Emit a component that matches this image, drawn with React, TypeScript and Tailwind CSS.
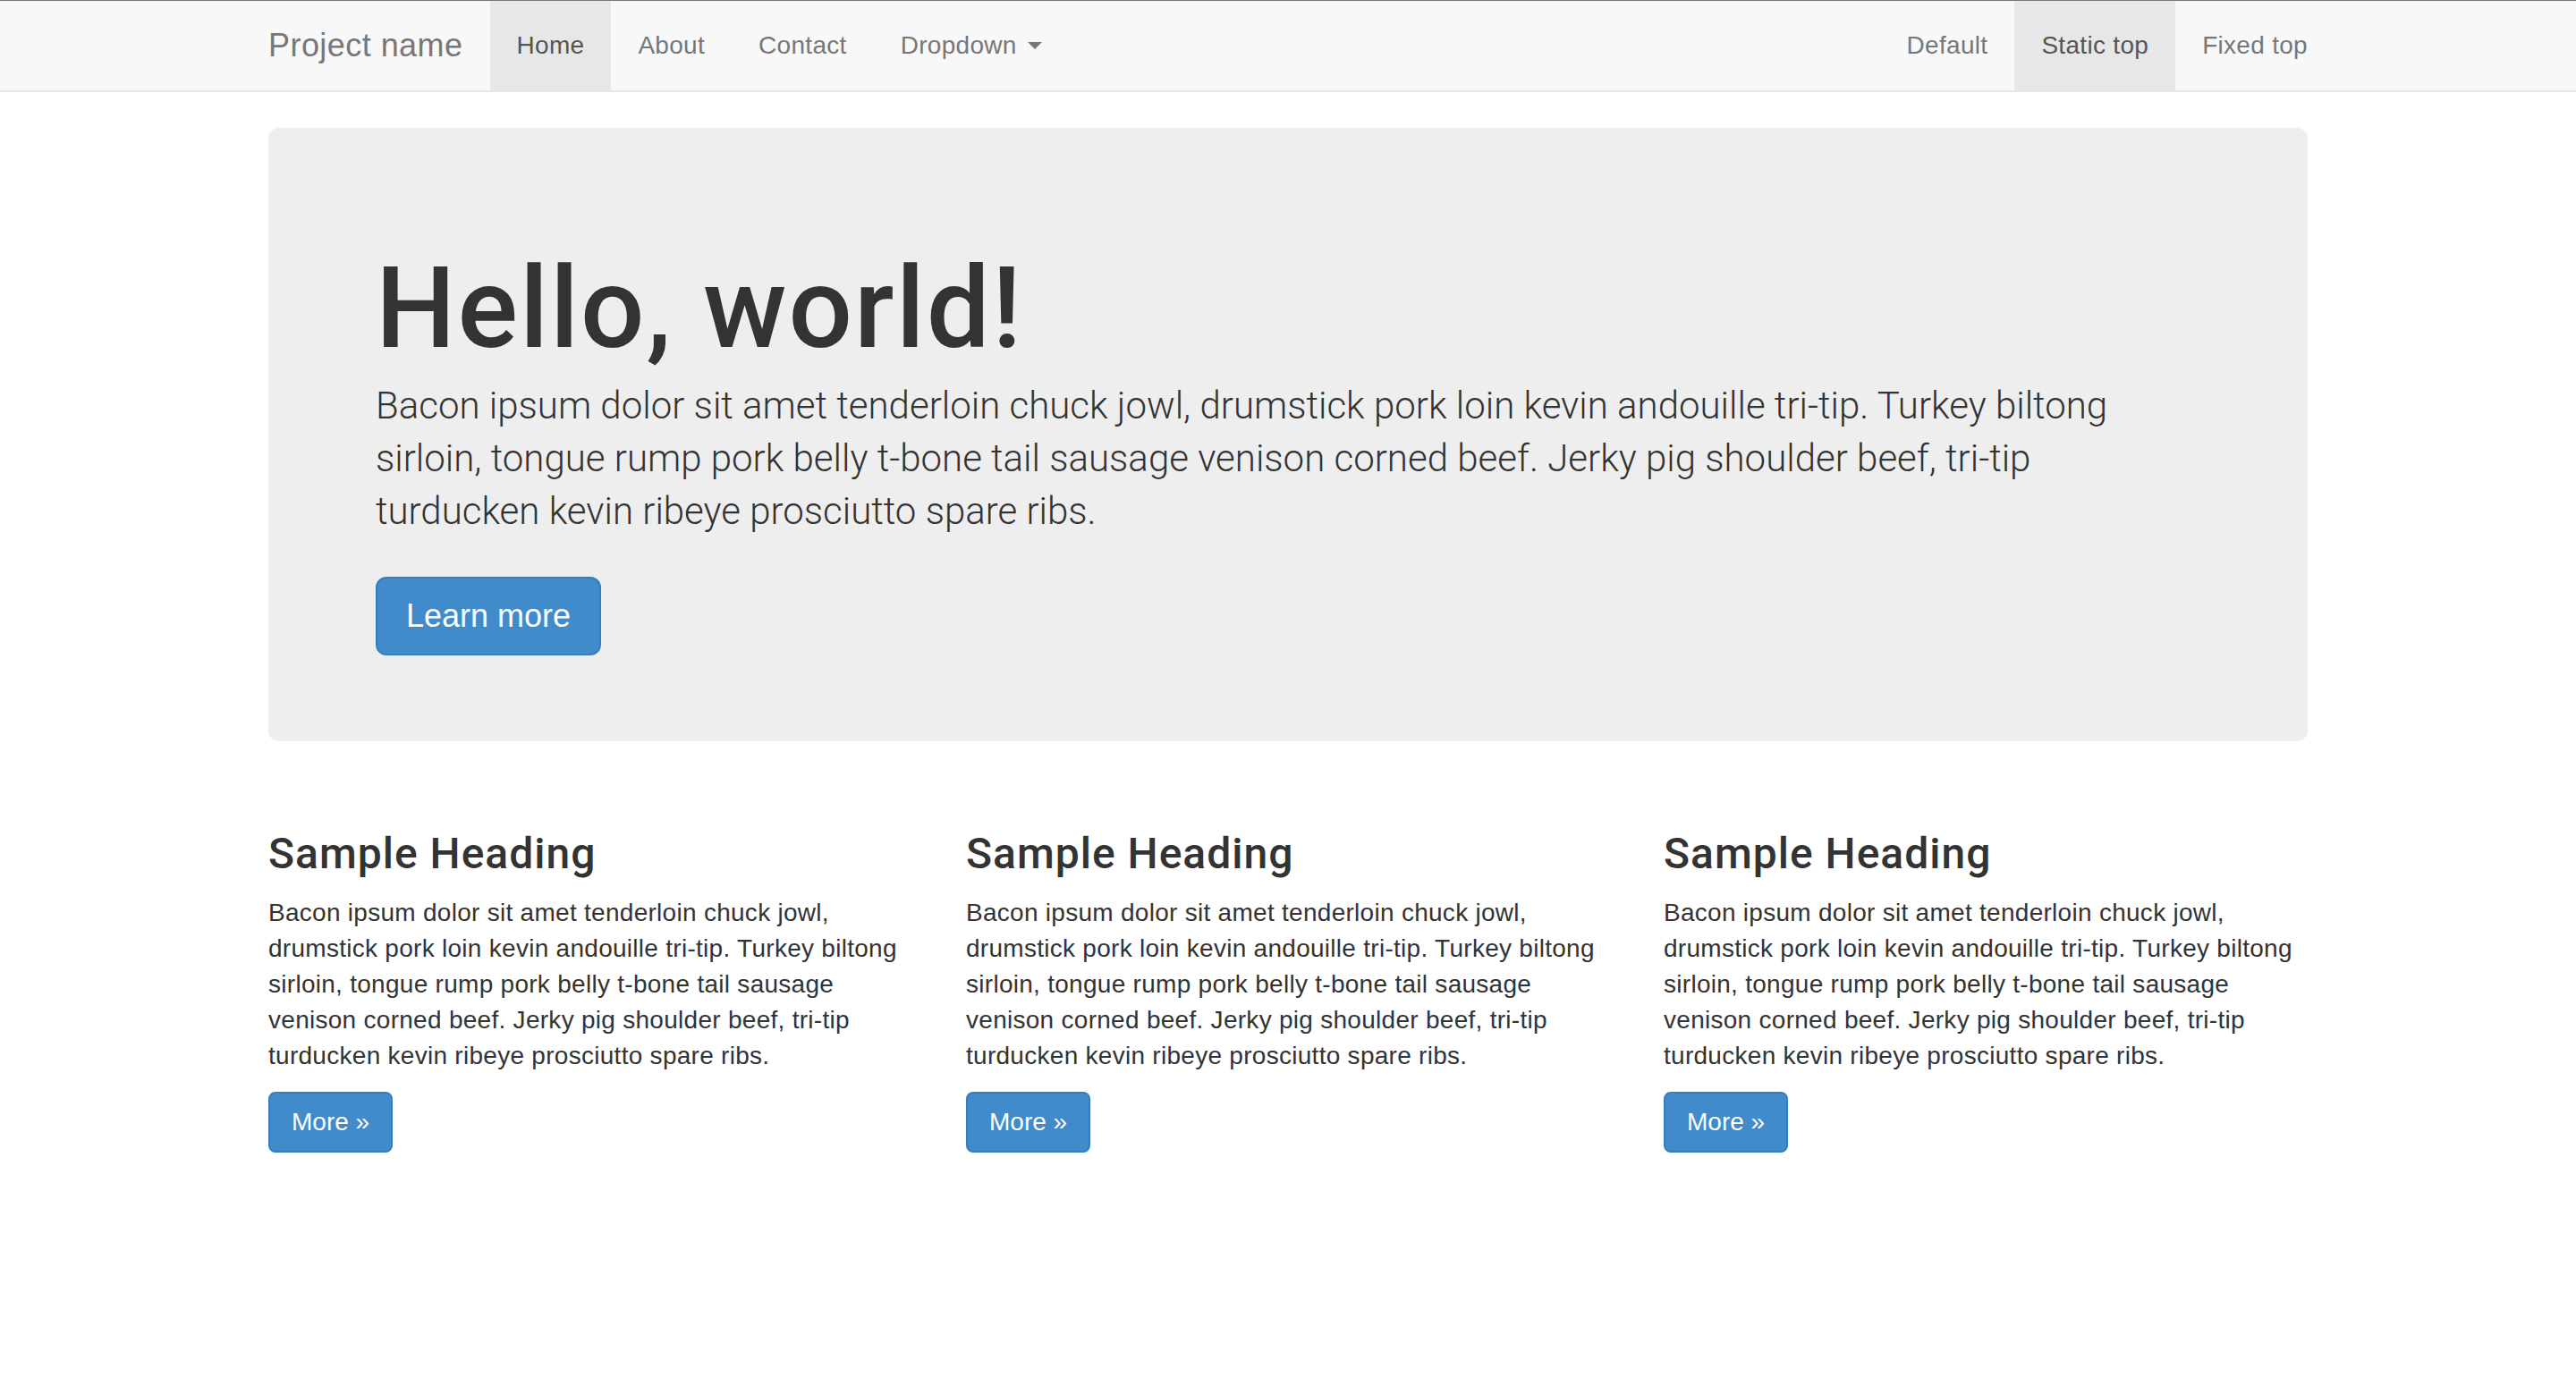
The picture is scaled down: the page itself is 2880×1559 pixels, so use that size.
import React from 'react';

const leftNav = [
  { name: 'Home', active: true },
  { name: 'About' },
  { name: 'Contact' },
];

const rightNav = [
  { name: 'Default' },
  { name: 'Static top', active: true },
  { name: 'Fixed top' },
];

const columnLines = [
  'Bacon ipsum dolor sit amet tenderloin chuck jowl,',
  'drumstick pork loin kevin andouille tri-tip. Turkey biltong',
  'sirloin, tongue rump pork belly t-bone tail sausage',
  'venison corned beef. Jerky pig shoulder beef, tri-tip',
  'turducken kevin ribeye prosciutto spare ribs.',
];

function NavItem({ name, active }: { name: string; active?: boolean }) {
  return (
    <li>
      <a
        href="#"
        className={`block px-[30px] py-[30px] text-[28px] leading-[40px] tracking-[0.3px] ${
          active ? 'bg-[#e7e7e7] text-[#555]' : 'text-[#777]'
        }`}
      >
        {name}
      </a>
    </li>
  );
}

function Column() {
  return (
    <div className="w-1/3 px-[30px]">
      <h3 className="mt-[40px] mb-[20px] font-['Roboto',Arial,sans-serif] text-[48px] leading-[1.1] font-medium tracking-[1px]">
        Sample Heading
      </h3>
      <p className="mb-[20px] text-[28px] leading-[40px] tracking-[0.28px] whitespace-nowrap">
        {columnLines.map((line, i) => (
          <React.Fragment key={i}>
            {line}
            {i < columnLines.length - 1 && <br />}
          </React.Fragment>
        ))}
      </p>
      <a
        href="#"
        className="inline-block rounded-[8px] border-2 border-[#357ebd] bg-[#428bca] px-[24px] py-[12px] text-[28px] leading-[40px] text-white"
      >
        More &raquo;
      </a>
    </div>
  );
}

export default function App() {
  return (
    <div className="min-h-screen bg-white font-['Liberation_Sans',Arial,sans-serif] text-[#333]">
      {/* Navbar */}
      <nav className="border-t border-t-[#777] border-b-2 border-b-[#e7e7e7] bg-[#f8f8f8]">
        <div className="mx-auto flex w-[2340px] px-[30px]">
          <a
            href="#"
            className="-ml-[30px] block px-[30px] py-[30px] text-[36px] leading-[40px] tracking-[0.45px] text-[#777]"
          >
            Project name
          </a>
          <ul className="flex">
            {leftNav.map((item) => (
              <NavItem key={item.name} {...item} />
            ))}
            <li>
              <a
                href="#"
                className="flex items-center px-[30px] py-[30px] text-[28px] leading-[40px] tracking-[0.3px] text-[#777]"
              >
                Dropdown
                <span className="ml-[12px] inline-block h-0 w-0 border-x-[8px] border-t-[8px] border-x-transparent border-t-[#777]" />
              </a>
            </li>
          </ul>
          <ul className="-mr-[30px] ml-auto flex">
            {rightNav.map((item) => (
              <NavItem key={item.name} {...item} />
            ))}
          </ul>
        </div>
      </nav>

      {/* Jumbotron */}
      <div className="mx-auto mt-[40px] w-[2340px] px-[30px]">
        <div className="rounded-[12px] bg-[#eee] px-[120px] pt-[96px] pb-[96px]">
          <h1 className="mt-[37px] mb-[9px] font-['Roboto',Arial,sans-serif] text-[126px] leading-[1.1] font-medium tracking-[2px]">
            Hello, world!
          </h1>
          <p className="mb-[44px] font-['Roboto',Arial,sans-serif] text-[42px] leading-[59px] font-light whitespace-nowrap">
            Bacon ipsum dolor sit amet tenderloin chuck jowl, drumstick pork loin kevin andouille tri-tip. Turkey biltong
            <br />
            sirloin, tongue rump pork belly t-bone tail sausage venison corned beef. Jerky pig shoulder beef, tri-tip
            <br />
            turducken kevin ribeye prosciutto spare ribs.
          </p>
          <a
            href="#"
            className="inline-block rounded-[12px] border-2 border-[#357ebd] bg-[#428bca] px-[32px] py-[18px] text-[36px] leading-[48px] text-white"
          >
            Learn more
          </a>
        </div>
      </div>

      {/* Columns */}
      <div className="mx-auto mt-[60px] w-[2340px] px-[30px]">
        <div className="-mx-[30px] flex">
          <Column />
          <Column />
          <Column />
        </div>
      </div>
    </div>
  );
}
